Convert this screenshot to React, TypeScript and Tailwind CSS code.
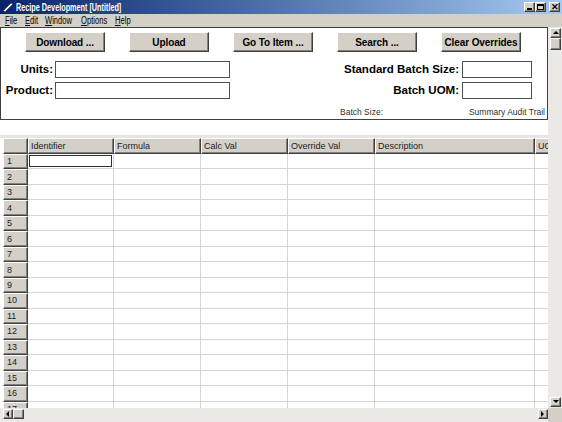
import React from 'react';

const raised =
  'border border-t-white border-l-white border-r-[#404040] border-b-[#404040] shadow-[inset_-1px_-1px_0_#808080]';

const columns = ['Identifier', 'Formula', 'Calc Val', 'Override Val', 'Description', 'UOM'];
const rows = Array.from({ length: 18 }, (_, i) => i + 1);

const menu = [
  { first: 'F', rest: 'ile', w: 'w-[20px]' },
  { first: 'E', rest: 'dit', w: 'w-[20px]' },
  { first: 'W', rest: 'indow', w: 'w-[36px]' },
  { first: 'O', rest: 'ptions', w: 'w-[34px]' },
  { first: 'H', rest: 'elp', w: 'w-[30px]' },
];

function TitleButton({ children }: { children: React.ReactNode }) {
  return (
    <div className={`w-[11px] h-[10px] bg-[#d4d0c8] ${raised} flex items-center justify-center`}>
      {children}
    </div>
  );
}

function Arrow({ dir }: { dir: 'up' | 'down' | 'left' | 'right' }) {
  const pts = {
    up: '1,5 4,2 7,5',
    down: '1,2 4,5 7,2',
    left: '5,1 2,4 5,7',
    right: '2,1 5,4 2,7',
  }[dir];
  return (
    <svg width="8" height="8" viewBox="0 0 8 8">
      <polygon points={pts} fill="#000" />
    </svg>
  );
}

export default function App() {
  return (
    <div className="w-[562px] h-[422px] overflow-hidden flex flex-col bg-white font-['Liberation_Sans',Arial,sans-serif] text-black">
      {/* Title bar */}
      <div className="h-[14px] flex items-center bg-gradient-to-r from-[#0a246a] to-[#a6caf0] pl-[2px] pr-[2px]">
        <svg width="12" height="12" viewBox="0 0 12 12">
          <polygon points="1,10 9,2 11,3 3,11" fill="#fff" stroke="#1a1a5a" strokeWidth="0.6" />
          <polygon points="1,10 3,11 1,11" fill="#000" />
        </svg>
        <span className="ml-[2px] inline-block origin-left scale-x-[0.66] whitespace-nowrap text-[11px] font-bold text-white leading-none">
          Recipe Development [Untitled]
        </span>
        <div className="ml-auto flex items-center">
          <TitleButton>
            <div className="w-[5px] h-[2px] bg-black mt-[4px]" />
          </TitleButton>
          <TitleButton>
            <div className="w-[7px] h-[6px] border border-black border-t-2" />
          </TitleButton>
          <div className="w-[3px]" />
          <TitleButton>
            <span className="text-[9px] font-bold leading-none">✕</span>
          </TitleButton>
        </div>
      </div>

      {/* Menu bar */}
      <div className="h-[13px] bg-[#d4d0c8] flex items-center pl-[5px] text-[10px] leading-none">
        {menu.map((m) => (
          <div key={m.first} className={m.w}>
            <span className="inline-block origin-left scale-x-[0.76] whitespace-nowrap">
              <span className="underline">{m.first}</span>
              {m.rest}
            </span>
          </div>
        ))}
      </div>

      {/* Body */}
      <div className="flex h-[381px]">
        <div className="w-[548px] flex flex-col overflow-hidden">
          {/* Top panel */}
          <div className="h-[93px] shrink-0 border border-[#404040] flex flex-col">
            <div className="flex gap-[24px] pl-[24px] pt-[4px]">
              {['Download ...', 'Upload', 'Go To Item ...', 'Search ...', 'Clear Overrides'].map((b) => (
                <div
                  key={b}
                  className={`w-[80px] h-[20px] bg-[#d4d0c8] ${raised} flex items-center justify-center whitespace-nowrap text-[10px] tracking-[-0.1px] font-bold`}
                >
                  {b}
                </div>
              ))}
            </div>

            <div className="flex items-center mt-[9px] h-[17px]">
              <span className="w-[52px] text-right text-[11.5px] font-bold">Units:</span>
              <div className="ml-[2px] w-[175px] h-[17px] border border-[#505050] bg-white" />
              <span className="ml-auto text-[11.5px] font-bold">Standard Batch Size:</span>
              <div className="ml-[3px] mr-[15px] w-[70px] h-[17px] border border-[#505050] bg-white" />
            </div>
            <div className="flex items-center mt-[4px] h-[17px]">
              <span className="w-[52px] text-right text-[11.5px] font-bold">Product:</span>
              <div className="ml-[2px] w-[175px] h-[17px] border border-[#505050] bg-white" />
              <span className="ml-auto text-[11.5px] font-bold">Batch UOM:</span>
              <div className="ml-[3px] mr-[15px] w-[70px] h-[17px] border border-[#505050] bg-white" />
            </div>
            <div className="flex items-center mt-[7px] text-[8.5px] text-[#333] pl-[339px] pr-[2px]">
              <span>Batch Size:</span>
              <span className="ml-auto">Summary Audit Trail</span>
            </div>
          </div>

          <div className="h-[15px] shrink-0" />
          <div className="h-[3px] shrink-0 bg-[#e8e6e2]" />

          {/* Grid */}
          <div className="ml-[3px] grid grid-cols-[25px_86px_87px_87px_87px_160px_60px] grid-rows-[16px] auto-rows-[15.47px] text-[9px] leading-none">
            <div className={`bg-[#d4d0c8] ${raised}`} />
            {columns.map((c) => (
              <div
                key={c}
                className={`bg-[#d4d0c8] ${raised} pl-[2px] flex items-center text-[#222] overflow-hidden whitespace-nowrap`}
              >
                {c}
              </div>
            ))}
            {rows.map((r) => (
              <React.Fragment key={r}>
                <div className={`bg-[#d4d0c8] ${raised} pl-[3px] flex items-center text-[#222]`}>{r}</div>
                {columns.map((c, i) => (
                  <div key={c} className="border-r border-b border-[#d8d6d0] relative">
                    {r === 1 && i === 0 && (
                      <div className="absolute inset-[1px] border border-[#303030]" />
                    )}
                  </div>
                ))}
              </React.Fragment>
            ))}
          </div>
        </div>

        {/* Vertical scrollbar */}
        <div className="w-[14px] bg-[#ebe9e5] flex flex-col items-end pr-[1px]">
          <div className={`mt-[1px] w-[11px] h-[10px] bg-[#d4d0c8] ${raised} flex items-center justify-center`}>
            <Arrow dir="up" />
          </div>
          <div className={`w-[11px] h-[12px] bg-[#d4d0c8] ${raised}`} />
          <div className="flex-1" />
          <div className={`mb-[1px] w-[11px] h-[10px] bg-[#d4d0c8] ${raised} flex items-center justify-center`}>
            <Arrow dir="down" />
          </div>
        </div>
      </div>

      {/* Horizontal scrollbar */}
      <div className="flex h-[14px]">
        <div className="w-[548px] bg-[#ebe9e5] flex items-start pt-[1px] pl-[3px]">
          <div className={`w-[10px] h-[10px] bg-[#d4d0c8] ${raised} flex items-center justify-center`}>
            <Arrow dir="left" />
          </div>
          <div className={`w-[11px] h-[10px] bg-[#d4d0c8] ${raised}`} />
          <div className="flex-1" />
          <div className={`w-[10px] h-[10px] bg-[#d4d0c8] ${raised} flex items-center justify-center`}>
            <Arrow dir="right" />
          </div>
        </div>
        <div className="flex-1 bg-[#d4d0c8]" />
      </div>
    </div>
  );
}
